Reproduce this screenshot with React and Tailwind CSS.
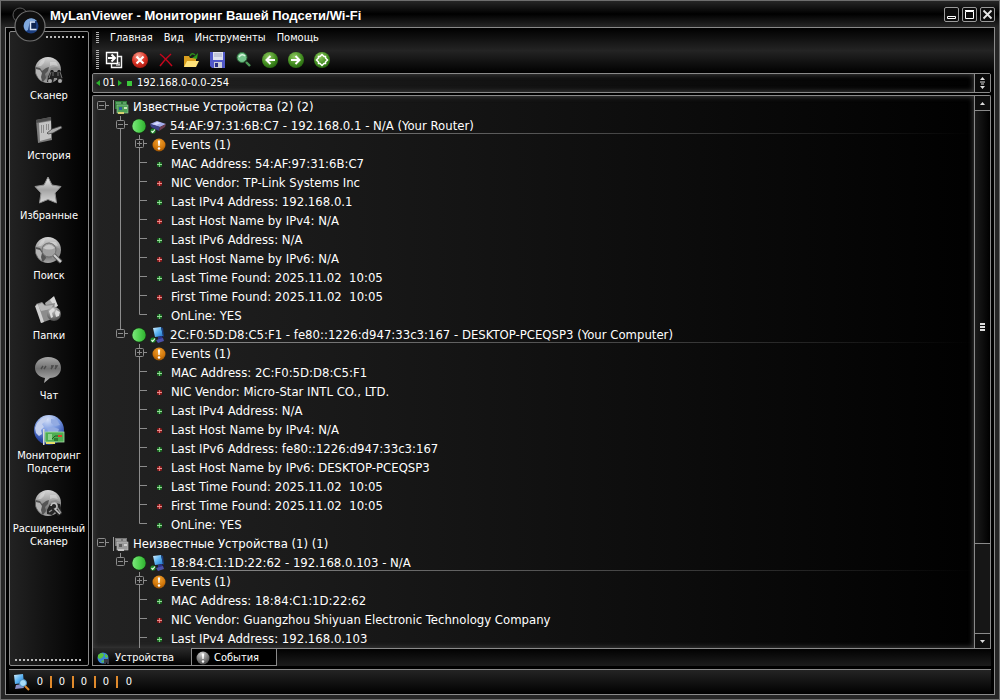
import { useState } from 'react'

const devices = [
  {
    group: 'Известные Устройства (2) (2)',
    known: true,
    items: [
      {
        title: '54:AF:97:31:6B:C7 - 192.168.0.1 - N/A (Your Router)',
        kind: 'router',
        details: [
          'MAC Address: 54:AF:97:31:6B:C7',
          'NIC Vendor: TP-Link Systems Inc',
          'Last IPv4 Address: 192.168.0.1',
          'Last Host Name by IPv4: N/A',
          'Last IPv6 Address: N/A',
          'Last Host Name by IPv6: N/A',
          'Last Time Found: 2025.11.02  10:05',
          'First Time Found: 2025.11.02  10:05',
          'OnLine: YES'
        ]
      },
      {
        title: '2C:F0:5D:D8:C5:F1 - fe80::1226:d947:33c3:167 - DESKTOP-PCEQSP3 (Your Computer)',
        kind: 'computer',
        details: [
          'MAC Address: 2C:F0:5D:D8:C5:F1',
          'NIC Vendor: Micro-Star INTL CO., LTD.',
          'Last IPv4 Address: N/A',
          'Last Host Name by IPv4: N/A',
          'Last IPv6 Address: fe80::1226:d947:33c3:167',
          'Last Host Name by IPv6: DESKTOP-PCEQSP3',
          'Last Time Found: 2025.11.02  10:05',
          'First Time Found: 2025.11.02  10:05',
          'OnLine: YES'
        ]
      }
    ]
  },
  {
    group: 'Неизвестные Устройства (1) (1)',
    known: false,
    items: [
      {
        title: '18:84:C1:1D:22:62 - 192.168.0.103 - N/A',
        kind: 'computer',
        more: true,
        details: [
          'MAC Address: 18:84:C1:1D:22:62',
          'NIC Vendor: Guangzhou Shiyuan Electronic Technology Company',
          'Last IPv4 Address: 192.168.0.103'
        ]
      }
    ]
  }
]

/* shared gradients */
const Defs = () => (
  <svg width="0" height="0" className="absolute" aria-hidden="true">
    <defs>
      <linearGradient id="gGlobe" x1="0" y1="0" x2="0" y2="1">
        <stop offset="0" stopColor="#d6d6d6" />
        <stop offset="0.4" stopColor="#a2a2a2" />
        <stop offset="0.75" stopColor="#767676" />
        <stop offset="1" stopColor="#a8a8a8" />
      </linearGradient>
      <radialGradient id="gGray" cx="0.4" cy="0.2" r="0.9">
        <stop offset="0" stopColor="#d0d0d0" />
        <stop offset="0.45" stopColor="#8a8a8a" />
        <stop offset="1" stopColor="#3c3c3c" />
      </radialGradient>
      <linearGradient id="gSilver" x1="0" y1="0" x2="0" y2="1">
        <stop offset="0" stopColor="#f0f0f0" />
        <stop offset="0.5" stopColor="#a4a4a4" />
        <stop offset="1" stopColor="#d8d8d8" />
      </linearGradient>
      <linearGradient id="gDim" x1="0" y1="0" x2="0" y2="1">
        <stop offset="0" stopColor="#a8a8a8" />
        <stop offset="0.45" stopColor="#707070" />
        <stop offset="1" stopColor="#b4b4b4" />
      </linearGradient>
      <radialGradient id="gBlue" cx="0.45" cy="0.15" r="0.95">
        <stop offset="0" stopColor="#d5e0f8" />
        <stop offset="0.4" stopColor="#7a9ae0" />
        <stop offset="0.75" stopColor="#2d4aa8" />
        <stop offset="1" stopColor="#16297a" />
      </radialGradient>
      <radialGradient id="gGreen" cx="0.4" cy="0.3" r="0.8">
        <stop offset="0" stopColor="#8fc860" />
        <stop offset="0.6" stopColor="#3f8a1e" />
        <stop offset="1" stopColor="#1f5a0c" />
      </radialGradient>
      <linearGradient id="gOnline" x1="0" y1="0" x2="1" y2="0">
        <stop offset="0" stopColor="#7de87d" />
        <stop offset="0.5" stopColor="#52d452" />
        <stop offset="1" stopColor="#2fb02f" />
      </linearGradient>
      <radialGradient id="gOrange" cx="0.5" cy="0.3" r="0.8">
        <stop offset="0" stopColor="#f0a030" />
        <stop offset="0.6" stopColor="#d0760a" />
        <stop offset="1" stopColor="#7a3e00" />
      </radialGradient>
      <radialGradient id="gRed" cx="0.4" cy="0.25" r="0.8">
        <stop offset="0" stopColor="#f8a090" />
        <stop offset="0.55" stopColor="#dc3426" />
        <stop offset="1" stopColor="#a0160e" />
      </radialGradient>
      <linearGradient id="gScreen" x1="0" y1="0" x2="1" y2="1">
        <stop offset="0" stopColor="#d6f1ff" />
        <stop offset="0.5" stopColor="#5db4f2" />
        <stop offset="1" stopColor="#1f70c8" />
      </linearGradient>
    </defs>
  </svg>
)

const Globe = () => (
  <>
    <circle cx="15" cy="16" r="13" fill="url(#gGlobe)" />
    <path d="M2.500 13 L7 14 L9 17 L13 14 L16 13 L15 17 L12 20 L13 24 L10 28 A13 13 0 0 1 2.500 13 Z" fill="#555" />
    <path d="M3 15 L7 16 L9 19 L8 23 L9 27 A13 13 0 0 1 3 19 Z" fill="#b4b4b4" />
    <path d="M16 17 L18 14 L23 13 L27 15 L27 20 L24 26 L19 25 L18 21 L16 20 Z" fill="#8e8e8e" />
    <path d="M8 7 L12 5 L11 9 L8 12 L5 12 Z M17 8 L23 8 L25 12 L20 11 L17 12 Z" fill="#e2e2e2" opacity="0.5" />
  </>
)

const Binoculars = () => (
  <g>
    <path d="M17 18 L18 16 L20 16 L21 18 L24 18 L25 16 L27 16 L28 18 L30 27 L25 29 L24 24 L21 24 L20 29 L14 28 L15 23 Z" fill="#222" />
    <path d="M18 18 L16 24 M20 18 L20 22 M25 18 L25 22 M27 18 L29 24" stroke="#858585" strokeWidth="0.8" />
    <circle cx="17" cy="27" r="2" fill="#a8a8a8" />
    <circle cx="27" cy="27" r="2" fill="#a8a8a8" />
  </g>
)

const SideIcon = ({ name }) => (
  <svg width="32" height="32" viewBox="0 0 32 32" className="shrink-0">
    {(name === 'scanner' || name === 'search' || name === 'advanced') && <Globe />}
    {name === 'scanner' && <Binoculars />}
    {name === 'advanced' && (
      <>
        <path d="M14 23 L17 17 L22 16 L27 17 L29 27 L25 29 L22 25 L19 28 L14 27 Z" fill="#262626" />
        <path d="M18 19 a3 3 0 1 1 4 3 l5 5" stroke="#c4c4c4" strokeWidth="1.600" fill="none" />
        <path d="M24 20 L28 26 M16 25 l3 -2" stroke="#909090" strokeWidth="1.400" />
      </>
    )}
    {name === 'search' && (
      <>
        <circle cx="16" cy="16" r="7" fill="#a0a0a0" stroke="#6e6e6e" strokeWidth="1" />
        <path d="M10 14 Q16 7 22 14 Q16 17 10 14 Z" fill="#c8c8c8" />
        <path d="M21 21 l7 7" stroke="#5e5e5e" strokeWidth="4" />
        <path d="M21 21 l7 7" stroke="#cfcfcf" strokeWidth="2" />
      </>
    )}
    {name === 'history' && (
      <>
        <path d="M3 6 L18 3 L19 26 L5 29 Z" fill="#7c7c7c" />
        <path d="M6 9 L18 7 L18 24 L7 27 Z" fill="#c4c4c4" />
        <path d="M3 6 L18 3 L18 6 L3 9 Z" fill="#4e4e4e" />
        <path d="M8 12 h3 M8 14 h3 M8 16 h3 M8 18 h3 M13 11 h4 M13 13 h4 M13 15 h4" stroke="#555" strokeWidth="1" strokeDasharray="1 1" />
        <path d="M14 19 L19 15 L28 12 L29 14 L20 19 L15 20 Z" fill="#a9a9a9" stroke="#3c3c3c" strokeWidth="0.7" />
      </>
    )}
    {name === 'star' && (
      <path
        d="M15 3 L19 11 L28 12.5 L22 19 L23.5 29 L15 25.5 L6.500 29 L8 19 L2 12.500 L11 11 Z"
        fill="url(#gSilver)"
        stroke="#8d8d8d"
        strokeWidth="1"
        strokeLinejoin="round"
      />
    )}
    {name === 'folders' && (
      <>
        <path d="M12 9 L20 3 L24 13 L14 16 Z" fill="#a8a8a8" />
        <path d="M17 6 L21 2 L25 12 L22 13 Z" fill="#d8d8d8" />
        <path d="M3 10 L9 8 L12 11 L22 9 L19 25 L8 29 Z" fill="#8c8c8c" />
        <path d="M2 12 L5 10 L11 28 L8 29 Z" fill="#d0d0d0" />
        <path d="M5 11 L9 9 L12 12 L20 11 L18 15 L8 17 Z" fill="#b8b8b8" />
        <circle cx="21" cy="20" r="7" fill="url(#gGray)" />
        <path d="M16 17 l4 -3 2 2 -3 3 1 4 -2 1 z M23 16 l4 2 -1 4 -3 1 -1 -4 z" fill="#dcdcdc" />
      </>
    )}
    {name === 'chat' && (
      <>
        <path d="M15 3 C24 3 28 8 28 14 C28 20 23 24 17 24 L11 29 L12 24 C6 23 2 19 2 14 C2 8 7 3 15 3 Z" fill="url(#gDim)" />
        <path d="M8 15 l2 -3 M11 15 l2 -3 M18 15 l2 -3 h-2 M22 15 l2 -3 h-2" stroke="#4a4a4a" strokeWidth="1.400" fill="none" />
      </>
    )}
    {name === 'monitor' && (
      <>
        <circle cx="16" cy="16" r="15" fill="url(#gBlue)" />
        <path d="M2 14 L4 9 L9 4 L15 3 L13 7 L9 10 L11 13 L8 16 L9 20 L6 22 L3 19 Z" fill="#c3d0ee" />
        <path d="M18 5 L24 6 L27 11 L22 12 L18 9 Z M14 14 L20 13 L26 15 L25 18 L15 18 Z" fill="#93abe2" />
        <rect x="10" y="15" width="1.500" height="16" fill="#d8d8d8" />
        <rect x="12" y="18" width="19" height="10" fill="#4fae52" stroke="#a8dca8" strokeWidth="0.8" />
        <rect x="15" y="20" width="4" height="6" fill="#8ed18e" />
        <rect x="21" y="24" width="4" height="3" fill="#2d7e31" />
        <path d="M19 25 l3 -3 5 0" stroke="#1e5b22" fill="none" />
        <rect x="25" y="21" width="4" height="2" fill="#e23c2c" />
        <rect x="13" y="28" width="9" height="2" fill="#e7dd6a" />
      </>
    )}
  </svg>
)

const sideItems = [
  { icon: 'scanner', label: 'Сканер' },
  { icon: 'history', label: 'История' },
  { icon: 'star', label: 'Избранные' },
  { icon: 'search', label: 'Поиск' },
  { icon: 'folders', label: 'Папки' },
  { icon: 'chat', label: 'Чат' },
  { icon: 'monitor', label: 'Мониторинг Подсети' },
  { icon: 'advanced', label: 'Расширенный Сканер' }
]

const ToolIcon = ({ name }) => (
  <svg width="20" height="20" viewBox="0 0 20 20">
    {name === 'exit' && (
      <>
        <path d="M7.500 6.500 h10 v11 h-10 z" fill="#222" stroke="#f2f2f2" strokeWidth="1.400" />
        <path d="M2.500 2.500 h11 v11 h-11 z" fill="#2c2c2c" stroke="#fff" strokeWidth="1.400" />
        <path d="M4 8 h7 M7.500 4.500 l3.500 3.500 -3.500 3.500" stroke="#fff" strokeWidth="2" fill="none" />
        <path d="M15 12 v3 M12 15 h4" stroke="#fff" />
      </>
    )}
    {name === 'stop' && (
      <>
        <circle cx="10" cy="10" r="8" fill="url(#gRed)" />
        <path d="M6.500 6.500 l7 7 M13.500 6.500 l-7 7" stroke="#fff" strokeWidth="2.200" />
      </>
    )}
    {name === 'delete' && <path d="M4 4 Q9 8 16 16 M15 4 Q9 9 4 16" stroke="#c4061c" strokeWidth="1.500" fill="none" />}
    {name === 'open' && (
      <>
        <path d="M2 6 h5 l1 2 h6 v9 h-12 z" fill="#d99e1e" />
        <path d="M5 11 h12 l-3 6 h-12 z" fill="#ffe27a" />
        <path d="M8 6 Q10 2 13 5" stroke="#2c8c1e" strokeWidth="1.600" fill="none" />
        <path d="M16 3 L15 9 L10 8 L13 6 Z" fill="#2c9c1e" />
      </>
    )}
    {name === 'save' && (
      <>
        <path d="M2 2 h15 v16 h-13 l-2 -2 z" fill="#5058c8" />
        <path d="M5 2 h10 v8 h-10 z" fill="#dfe2ef" />
        <path d="M6 4 h8 M6 6 h8" stroke="#a3a8c0" />
        <path d="M6 12 h8 v6 h-8 z" fill="#c9ccd8" />
        <path d="M7 13 h3 v4 h-3 z" fill="#2a2f86" />
      </>
    )}
    {name === 'find' && (
      <>
        <circle cx="8" cy="7.500" r="5" fill="#74c48c" stroke="#2f6e3c" strokeWidth="1" />
        <path d="M5 7 Q8 3 11 6" stroke="#d9f5df" strokeWidth="1.500" fill="none" />
        <path d="M12 12 l4 4" stroke="#4c9a58" strokeWidth="2.400" />
      </>
    )}
    {(name === 'back' || name === 'forward' || name === 'refresh') && (
      <circle cx="10" cy="10" r="8" fill="url(#gGreen)" />
    )}
    {name === 'back' && <path d="M15 10 h-8 M10.500 6 L6.500 10 L10.500 14" stroke="#fff" strokeWidth="2" fill="none" />}
    {name === 'forward' && <path d="M5 10 h8 M9.500 6 L13.500 10 L9.500 14" stroke="#fff" strokeWidth="2" fill="none" />}
    {name === 'refresh' && (
      <path d="M10 4.500 L12 6.500 H13.500 V8 L15.500 10 L13.500 12 V13.500 H12 L10 15.500 L8 13.500 H6.500 V12 L4.500 10 L6.500 8 V6.500 H8 Z" stroke="#fff" strokeWidth="1.500" fill="none" />
    )}
  </svg>
)

const tools = [
  { name: 'exit', label: 'Выход' },
  { name: 'stop', label: 'Стоп' },
  { name: 'delete', label: 'Удалить' },
  { name: 'open', label: 'Открыть' },
  { name: 'save', label: 'Сохранить' },
  { name: 'find', label: 'Найти' },
  { name: 'back', label: 'Назад' },
  { name: 'forward', label: 'Вперёд' },
  { name: 'refresh', label: 'Обновить' }
]

const Box = ({ open, up, down }) => (
  <svg width="19" height="19" viewBox="0 0 19 19" className="shrink-0" stroke="#8c8c8c" fill="none">
    {up && <path d="M8.500 0 V4" />}
    {down && <path d="M8.500 13 V19" />}
    <rect x="4.500" y="4.500" width="8" height="8" rx="1" />
    <path d="M6 8.500 H11 M13 8.500 H16" />
    {!open && <path d="M8.500 6 V11" />}
  </svg>
)

const Branch = ({ type }) => (
  <svg width="19" height="19" viewBox="0 0 19 19" className="shrink-0" stroke="#8c8c8c" fill="none">
    {type === 'line' && <path d="M8.500 0 V19" />}
    {type === 'tee' && <path d="M8.500 0 V19 M9 8.500 H16" />}
    {type === 'end' && <path d="M8.500 0 V8.500 H16" />}
  </svg>
)

const GroupIcon = ({ known }) => (
  <svg width="16" height="16" viewBox="0 0 16 16" className="shrink-0">
    <rect x="0" y="1" width="1" height="14" fill="#9a9a9a" />
    <rect x="2" y="2" width="12" height="8" fill={known ? '#2f7a3a' : '#777'} />
    <rect x="4" y="6" width="11" height="8" fill={known ? '#4ea057' : '#9a9a9a'} stroke={known ? '#9ad0a0' : '#c8c8c8'} strokeWidth="0.6" />
    <path d="M3 4 h5 M10 4 h3" stroke={known ? '#8cc892' : '#c0c0c0'} />
    <rect x="6" y="8" width="3" height="3" fill={known ? '#2c5f9a' : '#5c5c5c'} />
    <rect x="11" y="8" width="3" height="2" fill={known ? '#c8e8b8' : '#d0d0d0'} />
    <rect x="5" y="13" width="6" height="2" fill={known ? '#d8d070' : '#c4c4c4'} />
  </svg>
)

const DeviceIcon = ({ kind }) => (
  <svg width="16" height="16" viewBox="0 0 16 16" className="shrink-0">
    {kind === 'router' ? (
      <>
        <path d="M0 6 L7 3 L16 6 L10 9 Z" fill="#a4acec" />
        <path d="M0 6 L10 9 L9 13 L1 9 Z" fill="#3c4088" />
        <path d="M16 6 L10 9 L9 13 L15 9 Z" fill="#6c3c50" />
        <path d="M3 6 L7 4 L11 5 L6 7 Z" fill="#d8dcff" />
      </>
    ) : (
      <>
        <path d="M3 1 L11 0 L13 9 L5 10 Z" fill="url(#gScreen)" />
        <path d="M11 0 L13 1 L14 10 L13 9 Z" fill="#1b3f7e" />
        <path d="M8 10 L12 9 L13 12 L8 13 Z" fill="#2a2f88" />
        <path d="M6 13 L13 11 L14 14 L8 16 Z" fill="#4a50a8" />
      </>
    )}
    <circle cx="3" cy="13" r="2.600" fill="#1f8a2a" />
    <path d="M1.500 13 l1.200 1.400 L5 11.500" stroke="#e9ffe9" strokeWidth="1.200" fill="none" />
  </svg>
)

const OnlineDot = () => (
  <svg width="16" height="16" viewBox="0 0 16 16" className="shrink-0">
    <circle cx="8" cy="8" r="7.500" fill="#143014" />
    <circle cx="8" cy="8" r="6.700" fill="url(#gOnline)" />
  </svg>
)

const AlertIcon = ({ gray }) => (
  <svg width="14" height="14" viewBox="0 0 14 14" className="shrink-0">
    <circle cx="7" cy="7" r="6.500" fill={gray ? 'url(#gGray)' : 'url(#gOrange)'} />
    <path d="M5.800 2.500 h2.400 l-0.600 5.500 h-1.200 z" fill="#fff" />
    <circle cx="7" cy="10.500" r="1.200" fill="#fff" />
  </svg>
)

const Bullet = ({ red }) => (
  <svg width="16" height="16" viewBox="0 0 16 16" className="shrink-0">
    <rect x="5" y="6" width="5" height="5" rx="1.500" fill={red ? '#8c1c1c' : '#1c6a22'} />
    <rect x="7" y="6" width="1" height="5" fill={red ? '#e07070' : '#70c878'} />
    <rect x="5" y="8" width="5" height="1" fill={red ? '#e89090' : '#98dc9c'} />
  </svg>
)

const DeviceNode = ({ device, last }) => (
  <li>
    <div className="flex h-[19px] items-start">
      <span className="w-[19px] shrink-0" />
      <Box open up down={!last} />
      <span className="flex h-[19px] items-center"><OnlineDot /></span>
      <span className="ml-[3px] flex h-[19px] items-center"><DeviceIcon kind={device.kind} /></span>
      <div className="relative ml-1 h-[18px] min-w-0 flex-1 leading-[19px] whitespace-pre">
        {device.title}
        <span className="absolute inset-x-0 bottom-0 h-px bg-linear-to-r/srgb from-[#8c8c8c] to-transparent" />
      </div>
    </div>
    <ul>
      <li className="flex h-[19px]">
        <span className="w-[19px] shrink-0" />
        <Branch type={last ? 'none' : 'line'} />
        <Box up down />
        <span className="flex w-[21px] items-center pl-[2px]"><AlertIcon /></span>
        Events (1)
      </li>
      {device.details.map((text, i) => (
        <li key={text} className="flex h-[19px]">
          <span className="w-[19px] shrink-0" />
          <Branch type={last ? 'none' : 'line'} />
          <Branch type={!device.more && i === device.details.length - 1 ? 'end' : 'tee'} />
          <span className="flex w-[21px] items-center pl-[2px]"><Bullet red={i % 2 === 1} /></span>
          <span className="whitespace-pre">{text}</span>
        </li>
      ))}
    </ul>
  </li>
)

const Grip = () => (
  <span className="w-[3px] self-stretch bg-[repeating-linear-gradient(to_bottom,#b0b0b0_0_1px,transparent_1px_2px)]" />
)

const Dots = () => (
  <span className="h-[2px] flex-1 bg-[repeating-linear-gradient(to_right,#b8b8b8_0_2px,transparent_2px_4px)]" />
)

const winBtn = 'flex h-[15px] w-[15px] items-center justify-center rounded-[2px] border border-[#9a9a9a] bg-[#0c0c0c]'
const inset = 'shadow-[inset_0_0_5px_1px_#3a3a3a]'

const App = () => {
  const [address, setAddress] = useState('192.168.0-0.0-254')

  return (
    <div className="relative flex h-screen min-h-[400px] flex-col overflow-hidden border border-[#6e6e6e] bg-[#262626] px-1 pb-1 font-['DejaVu_Sans_Condensed','DejaVu_Sans',sans-serif] text-[11px] text-white">
      <Defs />

      {/* Title bar */}
      <header className="-mx-1 flex h-[26px] shrink-0 items-center justify-between bg-linear-to-b/srgb from-[#262626] via-black to-[#262626] pr-1 pl-[49px]">
        <h1 className="pt-1 font-['Liberation_Sans',Arial,sans-serif] text-[13px] font-bold whitespace-nowrap">
          MyLanViewer - Мониторинг Вашей Подсети/Wi-Fi
        </h1>
        <div className="flex gap-[3px]">
          <button aria-label="Свернуть" className={winBtn}>
            <svg width="11" height="11" viewBox="0 0 11 11"><path d="M1.500 7.500 h8 v2 h-8 z" fill="none" stroke="#fff" /></svg>
          </button>
          <button aria-label="Развернуть" className={winBtn}>
            <svg width="11" height="11" viewBox="0 0 11 11"><path d="M1.500 2.500 h8 v7 h-8 z M1 1.500 h9" fill="none" stroke="#fff" /></svg>
          </button>
          <button aria-label="Закрыть" className={winBtn}>
            <svg width="11" height="11" viewBox="0 0 11 11"><path d="M1.500 1.500 L9.500 9.500 M9.500 1.500 L1.500 9.500" stroke="#e6e6e6" strokeWidth="1.800" /></svg>
          </button>
        </div>
      </header>

      {/* Logo over the corner of the frame */}
      <svg width="44" height="44" viewBox="0 0 44 44" className="absolute top-0 left-[9px] z-10">
        <circle cx="10" cy="14" r="7" fill="#0a0a0a" stroke="#5a5a5a" />
        <circle cx="20" cy="25" r="15" fill="#101010" stroke="#707070" strokeWidth="1.200" />
        <circle cx="21" cy="25" r="7.500" fill="#1c3f80" />
        <path d="M14 23 A7.500 7.500 0 0 1 27 20 L20 20 L18 29 L16 30 A7 7 0 0 1 14 23 Z" fill="#7fa8dc" />
        <path d="M21 22 h5 v6 h-5 z" fill="#0e2450" />
        <path d="M20 21 h5 M20.500 21 v7.500 h6" stroke="#dce9fa" strokeWidth="1.500" fill="none" />
      </svg>

      {/* Frame */}
      <div className="flex min-h-0 flex-1 flex-col border border-[#8a8a8a] bg-black">
        <div className="flex min-h-0 flex-1 gap-[3px] px-[3px]">
          {/* Sidebar */}
          <nav className="mt-[3px] mb-[3px] flex w-20 shrink-0 flex-col rounded-[2px] border border-[#8a8a8a] bg-linear-to-r/srgb from-[#222] to-black">
            <div className="flex h-[10px] items-center pr-[2px] pl-9"><Dots /></div>
            <ul className="mt-3 flex flex-1 flex-col gap-3">
              {sideItems.map((item) => (
                <li key={item.icon}>
                  <a href="#" className="flex flex-col items-center gap-[3px] text-center leading-[13px]">
                    <SideIcon name={item.icon} />
                    <span>{item.label}</span>
                  </a>
                </li>
              ))}
            </ul>
            <div className="flex h-[6px] items-start px-[5px]"><Dots /></div>
          </nav>

          <main className="mb-[3px] flex min-w-0 flex-1 flex-col">
            {/* Menu and toolbar */}
            <div className="-mr-[3px] h-[45px] shrink-0 bg-linear-to-b/srgb from-black via-[#242424] to-black pl-1">
              <nav className="flex h-5 items-center gap-[11px] py-1">
                <Grip />
                <a href="#">Главная</a>
                <a href="#">Вид</a>
                <a href="#">Инструменты</a>
                <a href="#">Помощь</a>
              </nav>
              <div className="flex h-6 items-center gap-[6px] py-[2px]">
                <Grip />
                <div className="-ml-px flex gap-[6px]">
                  {tools.map((tool) => (
                    <button key={tool.name} aria-label={tool.label}>
                      <ToolIcon name={tool.name} />
                    </button>
                  ))}
                </div>
              </div>
            </div>

            {/* Address */}
            <div className="flex h-5 shrink-0 rounded-[2px] border border-[#8a8a8a] bg-linear-to-r/srgb from-[#222] to-black">
              <div className={`flex min-w-0 flex-1 items-center pl-[3px] ${inset}`}>
                <svg width="4" height="6" viewBox="0 0 4 6"><path d="M4 0 V6 L0 3 Z" fill="#2cb42c" /></svg>
                <span className="w-[18px] text-center">01</span>
                <svg width="4" height="6" viewBox="0 0 4 6"><path d="M0 0 V6 L4 3 Z" fill="#2cb42c" /></svg>
                <span className="mx-[5px] h-[5px] w-[5px] bg-[#3cc83c]" />
                <input
                  aria-label="Диапазон адресов"
                  className="min-w-0 flex-1 bg-transparent outline-none"
                  value={address}
                  onChange={(e) => setAddress(e.target.value)}
                />
              </div>
              <button aria-label="Список" className="flex w-4 items-center justify-center border-l border-[#8a8a8a] bg-[#0a0a0a]">
                <svg width="7" height="12" viewBox="0 0 7 12"><path d="M3.500 0 L6 3 H1 Z M3.500 12 L6 9 H1 Z M1 4.500 h5 v1 h-5 z M2 6.500 h3 v1 h-3 z" fill="#e0e0e0" /></svg>
              </button>
            </div>

            {/* Device tree */}
            <div className="mt-[2px] flex min-h-0 flex-1 rounded-t-[2px] border border-b-0 border-[#8a8a8a] bg-linear-to-r/srgb from-[#222] to-black">
              <div className={`min-w-0 flex-1 overflow-hidden pt-px text-[13px] leading-[19px] ${inset}`}>
                <ul>
                  {devices.map((g) => (
                    <li key={g.group}>
                      <div className="flex h-[19px]">
                        <Box open />
                        <span className="flex w-[21px] items-center pl-px"><GroupIcon known={g.known} /></span>
                        {g.group}
                      </div>
                      <ul>
                        {g.items.map((d, i) => (
                          <DeviceNode key={d.title} device={d} last={i === g.items.length - 1} />
                        ))}
                      </ul>
                    </li>
                  ))}
                </ul>
              </div>
              {/* Scrollbar */}
              <div className="flex w-4 shrink-0 flex-col border-l border-[#8a8a8a] bg-[#161616]">
                <button aria-label="Вверх" className="flex h-[15px] items-center justify-center border-b border-[#8a8a8a] bg-[#0e0e0e]">
                  <svg width="5" height="3" viewBox="0 0 5 3"><path d="M2.500 0 L5 3 H0 Z" fill="#ddd" /></svg>
                </button>
                <div className="min-h-0 flex-1">
                  <div className="flex h-[83%] items-center justify-center border-b border-[#8a8a8a] bg-linear-to-r/srgb from-[#1c1c1c] to-black">
                    <span className="h-[8px] w-[5px] bg-[repeating-linear-gradient(to_bottom,#ddd_0_2px,transparent_2px_3px)]" />
                  </div>
                </div>
                <button aria-label="Вниз" className="flex h-[15px] items-center justify-center border-t border-[#8a8a8a] bg-[#0e0e0e]">
                  <svg width="5" height="3" viewBox="0 0 5 3"><path d="M2.500 3 L5 0 H0 Z" fill="#ddd" /></svg>
                </button>
              </div>
            </div>

            {/* Tabs */}
            <div className="flex h-[18px] shrink-0 bg-linear-to-b/srgb from-black to-[#1c1c1c]">
              <button className="flex w-[99px] items-center gap-[5px] border-b border-l border-[#8a8a8a] bg-linear-to-b/srgb from-[#2a2a2a] to-black pt-[3px] pl-1">
                <svg width="13" height="13" viewBox="0 0 13 13">
                  <circle cx="6" cy="6" r="5.500" fill="#3a86d8" />
                  <path d="M1 3 L4 1 L7 2 L6 5 L3 7 L1 6 Z M8 2 L11 4 L10 6 L8 5 Z M4 9 L7 8 L6 11 Z" fill="#5cc43c" />
                  <path d="M7 7 h5 v5 h-2 v-2 h-1 v2 h-2 z" fill="#3a3a44" />
                </svg>
                Устройства
              </button>
              <button className="flex w-[86px] items-center gap-1 border border-[#8a8a8a] bg-black pt-[2px] pl-1">
                <AlertIcon gray />
                События
              </button>
              <span className="flex-1 border-t border-[#8a8a8a]" />
            </div>
          </main>
        </div>

        {/* Status bar */}
        <footer className="mx-[3px] flex h-[25px] shrink-0 items-center border-t border-[#8a8a8a] bg-linear-to-b/srgb from-[#242424] to-black pl-1">
          <svg width="17" height="17" viewBox="0 0 17 17">
            <path d="M1 1 L10 0 L11 9 L2 10 Z" fill="url(#gScreen)" />
            <path d="M3 11 L9 10 L11 14 L2 15 Z" fill="#8a90c8" />
            <circle cx="10" cy="9" r="3.500" fill="#a8dcf8" stroke="#4a8ec0" />
            <path d="M12 12 l4 4" stroke="#d8862c" strokeWidth="2" />
          </svg>
          <div className="flex divide-x-2 divide-[#e08a2c]">
            {[0, 0, 0, 0, 0].map((n, i) => (
              <span key={i} className="w-[22px] text-center leading-3">{n}</span>
            ))}
          </div>
        </footer>
      </div>
    </div>
  )
}

export default App
